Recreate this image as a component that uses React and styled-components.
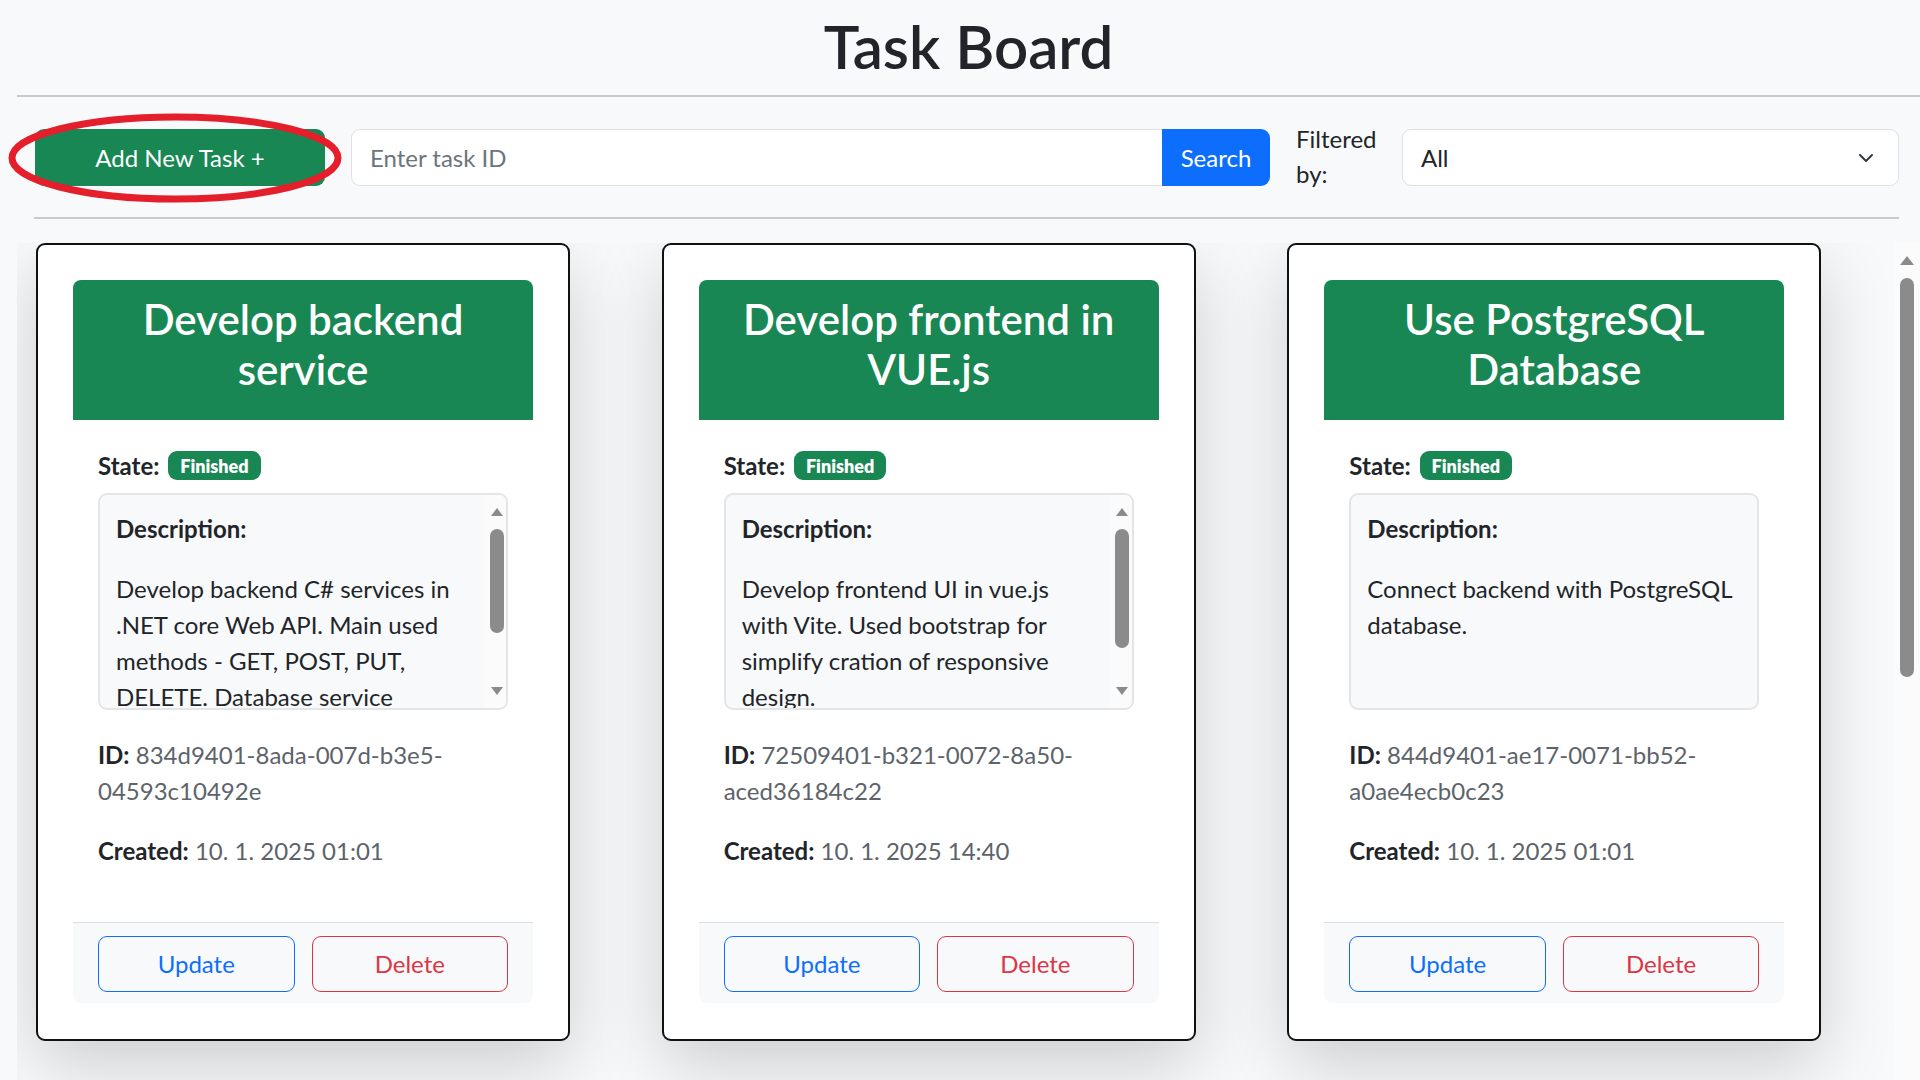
import React, { useLayoutEffect, useRef, useState } from "react";
import styled, { createGlobalStyle } from "styled-components";

const GlobalStyle = createGlobalStyle`
  *, *::before, *::after { box-sizing: border-box; }
  html, body {
    margin: 0;
    padding: 0;
    height: 100%;
    overflow: hidden;
    background: #f8f9fa;
  }
  body {
    font-family: Lato, "Noto Sans", sans-serif;
    font-size: 24px;
    line-height: 1.5;
    color: #212529;
  }
`;

const Page = styled.div`
  padding-left: 17px;
`;

const Header = styled.header`
  padding-top: 10px;
`;

const Title = styled.h1`
  margin: 0 0 13px;
  font-size: 60px;
  font-weight: 600;
  line-height: 1.2;
  text-align: center;
  color: #212529;
`;

const Rule = styled.hr`
  margin: 0;
  border: 0;
  border-top: 2px solid rgba(33, 37, 41, 0.22);
`;

const ToolbarSection = styled.section`
  margin: 32px 21px 0 17px;
`;

const Toolbar = styled.div`
  display: flex;
  align-items: center;
  gap: 26px;
  height: 57px;
  margin-bottom: 31px;
  padding-left: 1px;
`;

const AddWrap = styled.div`
  position: relative;
  flex: none;
`;

const AddButton = styled.button`
  width: 290px;
  height: 57px;
  border: 0;
  border-radius: 9px;
  background: #198754;
  color: #fff;
  font: inherit;
  font-size: 24px;
`;

const Highlight = styled.svg`
  position: absolute;
  left: -27px;
  top: -16px;
  pointer-events: none;
`;

const SearchGroup = styled.div`
  flex: 1;
  display: flex;
  height: 57px;
`;

const SearchInput = styled.input`
  flex: 1;
  min-width: 0;
  height: 57px;
  padding: 0 18px;
  border: 1.5px solid #dee2e6;
  border-right: 0;
  border-radius: 9px 0 0 9px;
  background: #fff;
  font: inherit;
  font-size: 24px;
  color: #212529;
  outline: none;
  &::placeholder { color: #6c757d; }
`;

const SearchButton = styled.button`
  width: 108px;
  height: 57px;
  border: 0;
  border-radius: 0 9px 9px 0;
  background: #0d6efd;
  color: #fff;
  font: inherit;
  font-size: 24px;
`;

const FilterLabel = styled.label`
  width: 77px;
  margin-right: 3px;
  line-height: 35px;
  font-size: 24px;
  transform: translateY(-2px);
`;

const SelectWrap = styled.div`
  position: relative;
  width: 497px;
  flex: none;
`;

const Select = styled.select`
  width: 100%;
  height: 57px;
  padding: 0 18px;
  appearance: none;
  border: 1.5px solid #dee2e6;
  border-radius: 9px;
  background: #fff;
  font: inherit;
  font-size: 24px;
  color: #212529;
  outline: none;
`;

const Chevron = styled.svg`
  position: absolute;
  right: 25px;
  top: 50%;
  transform: translateY(-50%);
  pointer-events: none;
`;

/* fake scrollbar parts, drawn like the classic Windows bar */
const Rail = styled.div`
  flex: none;
  display: ${(p) => (p.$active ? "flex" : "none")};
  flex-direction: column;
  align-items: center;
  width: ${(p) => p.$width}px;
  padding-left: ${(p) => p.$shift || 0}px;
  background: #fbfbfb;
`;

const ArrowSlot = styled.div`
  flex: none;
  display: flex;
  align-items: center;
  justify-content: center;
  height: ${(p) => p.$size}px;
`;

const Arrow = styled.span`
  width: 0;
  height: 0;
  border-left: ${(p) => p.$w / 2}px solid transparent;
  border-right: ${(p) => p.$w / 2}px solid transparent;
  ${(p) =>
    p.$down
      ? `border-top: ${p.$h}px solid #8b8b8b;`
      : `border-bottom: ${p.$h}px solid #8b8b8b;`}
`;

const Thumb = styled.div`
  flex: none;
  width: 14px;
  height: ${(p) => (p.$size ? `${p.$size}px` : "auto")};
  border-radius: 7px;
  background: #8b8b8b;
`;

const Spacer = styled.div`
  flex: 1;
`;

const Board = styled.main`
  display: flex;
  margin-top: 24px;
  height: calc(100vh - 243px);
  overflow: hidden;
`;

const BoardContent = styled.div`
  flex: 1;
  min-width: 0;
`;

const Grid = styled.div`
  display: grid;
  grid-template-columns: repeat(3, 1fr);
  align-items: start;
`;

const Card = styled.article`
  width: 534px;
  margin-left: 19px;
  padding: 35px 35px 36px;
  background: #fff;
  border: 2px solid #111;
  border-radius: 9px;
  box-shadow: 0 24px 72px rgba(0, 0, 0, 0.175);
`;

const Panel = styled.div`
  border-radius: 8px;
  background: #fff;
`;

const PanelHeader = styled.div`
  padding: 14px 24px 25px;
  border-radius: 8px 8px 0 0;
  background: #198754;
  color: #fff;
  text-align: center;
`;

const TaskTitle = styled.h3`
  margin: 0;
  font-size: 42px;
  font-weight: 600;
  line-height: 1.2;
`;

const PanelBody = styled.div`
  padding: 24px 25px 29px;
`;

const StateRow = styled.p`
  margin: 4px 0 9px;
  font-weight: 700;
`;

const Badge = styled.span`
  display: inline-block;
  margin-left: 3px;
  padding: 5.5px 12px;
  border-radius: 9px;
  background: #198754;
  color: #fff;
  font-size: 18px;
  font-weight: 800;
  line-height: 1;
  vertical-align: 2px;
`;

const DescBox = styled.div`
  display: flex;
  height: 217px;
  margin-bottom: 27px;
  overflow: hidden;
  border: 2px solid #e3e5e7;
  border-radius: 9px;
  background: #f8f9fa;
`;

const DescScroll = styled.div`
  flex: 1;
  min-width: 0;
  overflow: hidden;
  padding: 16px 12px 16px 16px;
`;

const DescContent = styled.div`
  display: flow-root;
`;

const Para = styled.p`
  margin: 0 0 24px;
`;

const Info = styled.p`
  margin: 0 0 24px;
  color: #5c636a;
  strong { color: #212529; }
`;

const PanelFooter = styled.div`
  display: flex;
  gap: 17px;
  padding: 13px 25px 11px;
  border-top: 1.5px solid #dcdee0;
  border-radius: 0 0 8px 8px;
  background: #f8f9fa;
`;

const tones = {
  primary: "#0d6efd",
  danger: "#dc3545",
};

const OutlineButton = styled.button`
  flex: 1;
  height: 56px;
  border: 1.5px solid ${(p) => tones[p.$tone]};
  border-radius: 9px;
  background: transparent;
  color: ${(p) => tones[p.$tone]};
  font: inherit;
  font-size: 24px;
`;

const tasks = [
  {
    title: "Develop backend service",
    state: "Finished",
    description:
      "Develop backend C# services in .NET core Web API. Main used methods - GET, POST, PUT, DELETE. Database service implemented with EF Core.",
    id: "834d9401-8ada-007d-b3e5-04593c10492e",
    created: "10. 1. 2025 01:01",
  },
  {
    title: "Develop frontend in VUE.js",
    state: "Finished",
    description:
      "Develop frontend UI in vue.js with Vite. Used bootstrap for simplify cration of responsive design.",
    id: "72509401-b321-0072-8a50-aced36184c22",
    created: "10. 1. 2025 14:40",
  },
  {
    title: "Use PostgreSQL Database",
    state: "Finished",
    description: "Connect backend with PostgreSQL database.",
    id: "844d9401-ae17-0071-bb52-a0ae4ecb0c23",
    created: "10. 1. 2025 01:01",
  },
];

const ARROW_SLOT = 34;
const BOX_PAD = 32;

function Description({ text }) {
  const scrollRef = useRef(null);
  const contentRef = useRef(null);
  const [thumb, setThumb] = useState(0);
  const active = thumb > 0;

  // measure overflow first without the bar, then again once the bar takes its width
  useLayoutEffect(() => {
    const box = scrollRef.current;
    const content = contentRef.current;
    if (!box || !content) return;
    const needed = content.offsetHeight + BOX_PAD;
    const visible = box.clientHeight;
    if (needed > visible + 1) {
      const track = visible - ARROW_SLOT * 2;
      setThumb(Math.round((track * visible) / needed));
    } else {
      setThumb(0);
    }
  }, [text, active]);

  return (
    <DescBox>
      <DescScroll ref={scrollRef}>
        <DescContent ref={contentRef}>
          <Para>
            <strong>Description:</strong>
          </Para>
          <Para>{text}</Para>
        </DescContent>
      </DescScroll>
      <Rail $width={22} $shift={3} $active={active}>
        <ArrowSlot $size={ARROW_SLOT}>
          <Arrow $w={12} $h={8} />
        </ArrowSlot>
        <Thumb style={{ height: thumb }} />
        <Spacer />
        <ArrowSlot $size={ARROW_SLOT}>
          <Arrow $w={12} $h={8} $down />
        </ArrowSlot>
      </Rail>
    </DescBox>
  );
}

function TaskCard({ task }) {
  return (
    <Card>
      <Panel>
        <PanelHeader>
          <TaskTitle>{task.title}</TaskTitle>
        </PanelHeader>
        <PanelBody>
          <StateRow>
            State: <Badge>{task.state}</Badge>
          </StateRow>
          <Description text={task.description} />
          <Info>
            <strong>ID:</strong> {task.id}
          </Info>
          <Info>
            <strong>Created:</strong> {task.created}
          </Info>
        </PanelBody>
        <PanelFooter>
          <OutlineButton $tone="primary">Update</OutlineButton>
          <OutlineButton $tone="danger">Delete</OutlineButton>
        </PanelFooter>
      </Panel>
    </Card>
  );
}

export default function App() {
  return (
    <>
      <GlobalStyle />
      <Page>
        <Header>
          <Title>Task Board</Title>
          <Rule />
        </Header>
        <ToolbarSection>
          <Toolbar>
            <AddWrap>
              <AddButton>Add New Task +</AddButton>
              <Highlight width="334" height="90" viewBox="0 0 334 90">
                <ellipse cx="167" cy="45" rx="163" ry="41" fill="none" stroke="#e41f2b" strokeWidth="7" />
              </Highlight>
            </AddWrap>
            <SearchGroup>
              <SearchInput placeholder="Enter task ID" />
              <SearchButton>Search</SearchButton>
            </SearchGroup>
            <FilterLabel>Filtered by:</FilterLabel>
            <SelectWrap>
              <Select defaultValue="all">
                <option value="all">All</option>
                <option value="new">New</option>
                <option value="progress">In progress</option>
                <option value="finished">Finished</option>
              </Select>
              <Chevron width="16" height="10" viewBox="0 0 16 10">
                <path d="M2 2l6 6 6-6" fill="none" stroke="#343a40" strokeWidth="2" strokeLinecap="round" strokeLinejoin="round" />
              </Chevron>
            </SelectWrap>
          </Toolbar>
          <Rule />
        </ToolbarSection>
        <Board>
          <BoardContent>
            <Grid>
              {tasks.map((t) => (
                <TaskCard key={t.id} task={t} />
              ))}
            </Grid>
          </BoardContent>
          <Rail $width={26} $active>
            <ArrowSlot $size={35}>
              <Arrow $w={14} $h={9} />
            </ArrowSlot>
            <Thumb $size={399} />
          </Rail>
        </Board>
      </Page>
    </>
  );
}
